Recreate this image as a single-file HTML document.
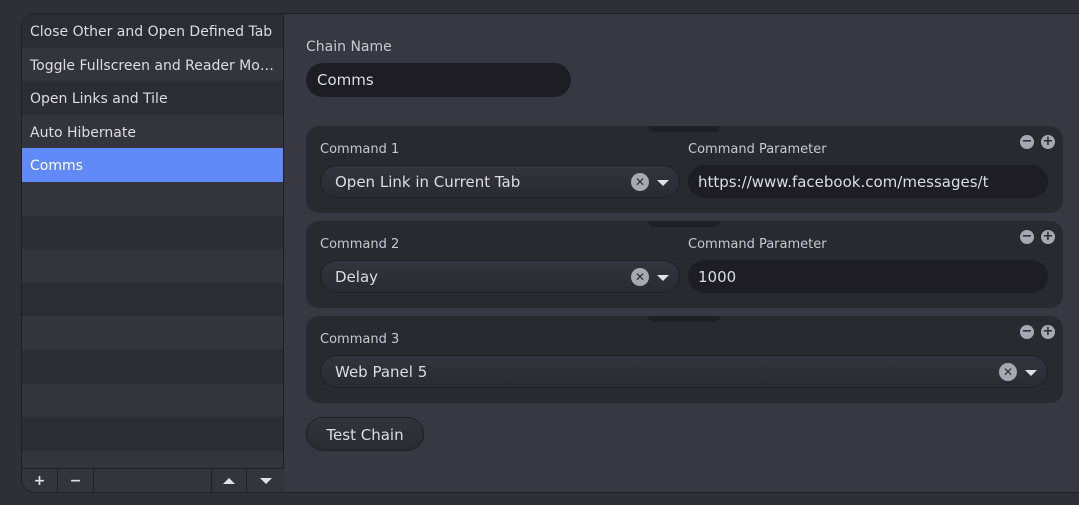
<!DOCTYPE html>
<html><head><style>
*{box-sizing:border-box;margin:0;padding:0}
body{width:1079px;height:505px;background:#2f2f37;font-family:"DejaVu Sans","Liberation Sans",sans-serif;color:#dcdce4;position:relative;overflow:hidden;font-size:14px}
.win{position:absolute;left:21px;top:13px;width:1070px;height:480px;border:1px solid #1f1f25;border-radius:14px 0 0 14px;background:#383842;overflow:hidden}
.list{position:absolute;left:0;top:0;width:262px;height:479px;border-right:1px solid #1f1f25;background:#34343d}
.row{height:33.6px;line-height:37px;padding-left:8px;white-space:nowrap;overflow:hidden;font-size:14px}
.row:nth-child(odd){background:#2c2c34}
.row.sel{background:#5f8af7;color:#fff}
.tb{position:absolute;left:0;bottom:0;width:262px;height:25px;border-top:1px solid #1f1f25;background:#34343d}
.tb div{position:absolute;top:0;height:24px;border-right:1px solid #1f1f25;color:#e0e0e8;text-align:center;line-height:24px;font-weight:bold;font-size:14px}
.lbl{position:absolute;font-size:13px;color:#c8c8d0}
.box{position:absolute;left:284px;width:757px;height:87px;background:#292930;border-radius:13px}
.lip{position:absolute;left:342px;top:0;width:72px;height:6px;background:#1f1f25;border-radius:0 0 8px 8px}
.sel2{position:absolute;height:33px;border:1px solid #1e1e24;border-radius:17px;background:linear-gradient(#34343d,#2a2a31);font-size:15px;line-height:33px;padding-left:14px}
.inp{position:absolute;height:33px;border-radius:17px;background:#1d1d23;font-size:15px;line-height:35px;padding-left:10px}
.x{position:absolute;top:7px;width:18px;height:18px;border-radius:50%;background:#a8a8b0;color:#2a2a30;font-size:12px;line-height:18px;text-align:center;font-weight:bold}
.ar{position:absolute;top:14px;width:0;height:0;border-left:6px solid transparent;border-right:6px solid transparent;border-top:6px solid #e0e0e8}
.pm{position:absolute;top:9px;width:14px;height:14px;border-radius:50%;background:#a8a8b0;color:#2a2a30;font-size:13px;line-height:14px;text-align:center;font-weight:bold}
.tri{display:inline-block;width:0;height:0;border-left:6px solid transparent;border-right:6px solid transparent;vertical-align:middle}
</style></head><body>
<div class="win">
 <div class="list">
  <div class="row">Close Other and Open Defined Tab</div>
  <div class="row">Toggle Fullscreen and Reader Mo…</div>
  <div class="row">Open Links and Tile</div>
  <div class="row">Auto Hibernate</div>
  <div class="row sel">Comms</div>
  <div class="row"></div><div class="row"></div><div class="row"></div><div class="row"></div><div class="row"></div><div class="row"></div><div class="row"></div><div class="row"></div>
  <div class="tb">
   <div style="left:0;width:36px">+</div>
   <div style="left:36px;width:36px">−</div>
   <div style="left:72px;width:118px"></div>
   <div style="left:190px;width:35px"><span class="tri" style="border-bottom:6px solid #e0e0e8"></span></div>
   <div style="left:225px;width:37px;border-right:none"><span class="tri" style="border-top:6px solid #e0e0e8"></span></div>
  </div>
 </div>
 <div class="lbl" style="left:284px;top:25px;font-size:14px">Chain Name</div>
 <div class="inp" style="left:284px;top:49px;width:265px;height:34px;padding-left:11px">Comms</div>

 <div class="box" style="top:112px"><div class="lip"></div>
  <div class="lbl" style="left:14px;top:16px">Command 1</div>
  <div class="lbl" style="left:382px;top:16px">Command Parameter</div>
  <div class="pm" style="left:714px">−</div><div class="pm" style="left:735px">+</div>
  <div class="sel2" style="left:14px;top:39px;width:360px">Open Link in Current Tab<div class="x" style="left:310px">✕</div><div class="ar" style="left:336px"></div></div>
  <div class="inp" style="left:382px;top:39px;width:360px">https://www.facebook.com/messages/t</div>
 </div>
 <div class="box" style="top:207px"><div class="lip"></div>
  <div class="lbl" style="left:14px;top:16px">Command 2</div>
  <div class="lbl" style="left:382px;top:16px">Command Parameter</div>
  <div class="pm" style="left:714px">−</div><div class="pm" style="left:735px">+</div>
  <div class="sel2" style="left:14px;top:39px;width:360px">Delay<div class="x" style="left:310px">✕</div><div class="ar" style="left:336px"></div></div>
  <div class="inp" style="left:382px;top:39px;width:360px">1000</div>
 </div>
 <div class="box" style="top:302px"><div class="lip"></div>
  <div class="lbl" style="left:14px;top:16px">Command 3</div>
  <div class="pm" style="left:714px">−</div><div class="pm" style="left:735px">+</div>
  <div class="sel2" style="left:14px;top:39px;width:728px">Web Panel 5<div class="x" style="left:678px">✕</div><div class="ar" style="left:704px"></div></div>
 </div>
 <div class="sel2" style="left:284px;top:403px;width:118px;height:34px;padding-left:0;text-align:center;line-height:34px">Test Chain</div>
</div>
</body></html>
